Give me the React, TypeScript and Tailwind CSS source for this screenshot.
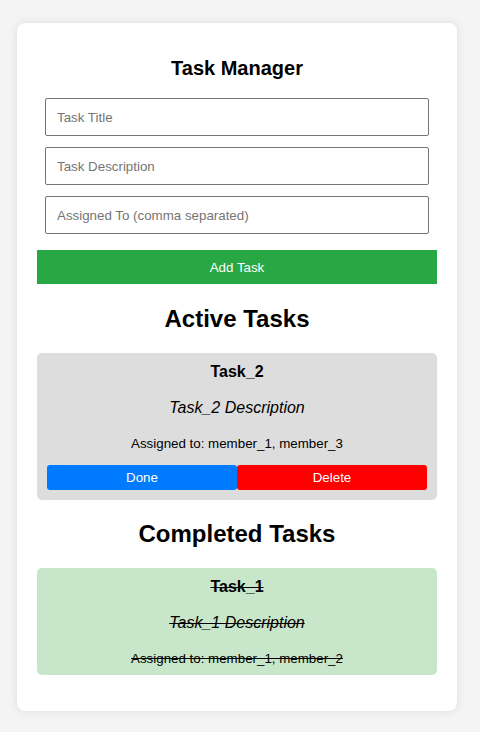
import { useState } from 'react';

type Task = {
  id: number;
  title: string;
  description: string;
  assignedTo: string[];
  done: boolean;
};

const INITIAL: Task[] = [
  { id: 1, title: 'Task_1', description: 'Task_1 Description', assignedTo: ['member_1', 'member_2'], done: true },
  { id: 2, title: 'Task_2', description: 'Task_2 Description', assignedTo: ['member_1', 'member_3'], done: false },
];

export default function App() {
  const [tasks, setTasks] = useState<Task[]>(INITIAL);
  const [title, setTitle] = useState('');
  const [description, setDescription] = useState('');
  const [assigned, setAssigned] = useState('');

  const addTask = () => {
    if (!title.trim()) return;
    setTasks([
      ...tasks,
      {
        id: Date.now(),
        title,
        description,
        assignedTo: assigned.split(',').map(s => s.trim()).filter(Boolean),
        done: false,
      },
    ]);
    setTitle('');
    setDescription('');
    setAssigned('');
  };

  const markDone = (id: number) => setTasks(tasks.map(t => (t.id === id ? { ...t, done: true } : t)));
  const remove = (id: number) => setTasks(tasks.filter(t => t.id !== id));

  const active = tasks.filter(t => !t.done);
  const completed = tasks.filter(t => t.done);

  const inputClass =
    'mx-2 mb-[11px] h-[38px] border border-[#767676] rounded-[2px] px-[11px] text-[13.33px] text-black placeholder:text-[#757575] outline-none';

  return (
    <div className="min-h-screen bg-[#f4f4f4] pt-[23px] pb-[21px] font-['Liberation_Sans',Arial,sans-serif] text-black">
      <div className="ml-[17px] w-[440px] bg-white rounded-[8px] shadow-[0_0_10px_rgba(0,0,0,0.1)] px-5 pt-[33px] pb-[36px]">
        <h1 className="text-center text-[20px] font-bold leading-[24px] mb-[18px]">Task Manager</h1>

        <div className="flex flex-col">
          <input className={inputClass} placeholder="Task Title" value={title} onChange={e => setTitle(e.target.value)} />
          <input className={inputClass} placeholder="Task Description" value={description} onChange={e => setDescription(e.target.value)} />
          <input className={inputClass} placeholder="Assigned To (comma separated)" value={assigned} onChange={e => setAssigned(e.target.value)} />
          <button
            onClick={addTask}
            className="mt-[5px] h-[34px] pt-[1px] bg-[#28a745] text-white text-[13.33px] cursor-pointer"
          >
            Add Task
          </button>
        </div>

        <h2 className="text-center text-[24px] font-bold leading-[28px] mt-[21px] mb-[20px]">Active Tasks</h2>
        <div className="flex flex-col gap-4">
          {active.map(task => (
            <div key={task.id} className="bg-[#dddddd] rounded-[5px] px-[10px] pt-[11px] pb-[10px] text-center">
              <h3 className="text-[16px] font-bold leading-[16px] mb-[19px]">{task.title}</h3>
              <p className="text-[16px] italic leading-[18px] mb-[19px]">{task.description}</p>
              <p className="text-[13.33px] leading-[16px] mb-[13px]">Assigned to: {task.assignedTo.join(', ')}</p>
              <div className="flex">
                <button
                  onClick={() => markDone(task.id)}
                  className="flex-1 h-[25px] bg-[#007bff] text-white text-[13.33px] rounded-[3px] cursor-pointer"
                >
                  Done
                </button>
                <button
                  onClick={() => remove(task.id)}
                  className="flex-1 h-[25px] bg-[#ff0000] text-white text-[13.33px] rounded-[3px] cursor-pointer"
                >
                  Delete
                </button>
              </div>
            </div>
          ))}
        </div>

        <h2 className="text-center text-[24px] font-bold leading-[28px] mt-5 mb-5">Completed Tasks</h2>
        <div className="flex flex-col gap-4">
          {completed.map(task => (
            <div key={task.id} className="bg-[#c8e6c9] rounded-[5px] px-[10px] pt-[11px] pb-[8px] text-center line-through">
              <h3 className="text-[16px] font-bold leading-[16px] mb-[19px]">{task.title}</h3>
              <p className="text-[16px] italic leading-[18px] mb-[19px]">{task.description}</p>
              <p className="text-[13.33px] leading-[16px]">Assigned to: {task.assignedTo.join(', ')}</p>
            </div>
          ))}
        </div>
      </div>
    </div>
  );
}
